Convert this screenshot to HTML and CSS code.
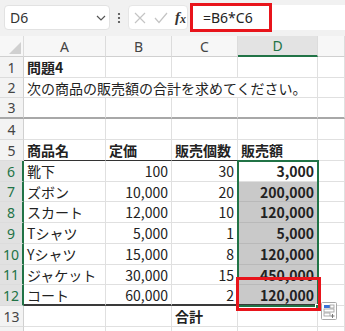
FILE: index.html
```html
<!DOCTYPE html>
<html lang="ja">
<head>
    <meta charset="UTF-8">
    <meta name="viewport" content="width=device-width, initial-scale=1.0">
    <title>問題4</title>
    <link rel="stylesheet" href="styles.css">
</head>
<body>
    <div class="formula-bar">
        <div class="name-box">
            <span>D6</span>
            <svg width="10" height="6" viewBox="0 0 10 6"><polyline points="1,1 5,5 9,1" fill="none" stroke="#555" stroke-width="1.2"/></svg>
        </div>
        <div class="kebab">
            <svg width="4" height="12" viewBox="0 0 4 12"><circle cx="2" cy="2" r="1.1" fill="#444"/><circle cx="2" cy="6" r="1.1" fill="#444"/><circle cx="2" cy="10" r="1.1" fill="#444"/></svg>
        </div>
        <div class="fx-buttons">
            <svg width="12" height="12" viewBox="0 0 12 12"><path d="M1 1 L11 11 M11 1 L1 11" stroke="#c4c4c4" stroke-width="1.2" fill="none"/></svg>
            <svg width="14" height="12" viewBox="0 0 14 12"><polyline points="1,6 5,10.5 13,1" fill="none" stroke="#c4c4c4" stroke-width="1.2"/></svg>
            <span class="fx">f<span>x</span></span>
        </div>
        <div class="formula-input">
            <span>=B6*C6</span>
            <div class="highlight"></div>
        </div>
    </div>

    <div class="sheet">
        <!-- column headers -->
        <div class="corner"><svg width="12" height="12" viewBox="0 0 12 12"><polygon points="12,0 12,12 0,12" fill="#d0d0d0"/></svg></div>
        <div class="ch">A</div>
        <div class="ch">B</div>
        <div class="ch">C</div>
        <div class="ch ch-sel">D</div>
        <div class="ch"></div>

        <!-- 1 -->
        <div class="rh">1</div>
        <div class="c b">問題4</div>
        <div class="c"></div>
        <div class="c"></div>
        <div class="c"></div>
        <div class="c"></div>

        <!-- 2 -->
        <div class="rh">2</div>
        <div class="c wide">次の商品の販売額の合計を求めてください。</div>
        <div class="c"></div>

        <!-- 3 -->
        <div class="rh fz">3</div>
        <div class="c fz"></div>
        <div class="c fz"></div>
        <div class="c fz"></div>
        <div class="c fz"></div>
        <div class="c fz"></div>

        <!-- 4 -->
        <div class="rh">4</div>
        <div class="c"></div>
        <div class="c"></div>
        <div class="c"></div>
        <div class="c"></div>
        <div class="c"></div>

        <!-- 5 -->
        <div class="rh">5</div>
        <div class="c b th">商品名</div>
        <div class="c b th">定価</div>
        <div class="c b th">販売個数</div>
        <div class="c b th">販売額</div>
        <div class="c"></div>

        <!-- 6 -->
        <div class="rh rh-sel">6</div>
        <div class="c">靴下</div>
        <div class="c num">100</div>
        <div class="c num">30</div>
        <div class="c num b">3,000</div>
        <div class="c"></div>

        <!-- 7 -->
        <div class="rh rh-sel">7</div>
        <div class="c">ズボン</div>
        <div class="c num">10,000</div>
        <div class="c num">20</div>
        <div class="c num b sel">200,000</div>
        <div class="c"></div>

        <!-- 8 -->
        <div class="rh rh-sel">8</div>
        <div class="c">スカート</div>
        <div class="c num">12,000</div>
        <div class="c num">10</div>
        <div class="c num b sel">120,000</div>
        <div class="c"></div>

        <!-- 9 -->
        <div class="rh rh-sel">9</div>
        <div class="c">Tシャツ</div>
        <div class="c num">5,000</div>
        <div class="c num">1</div>
        <div class="c num b sel">5,000</div>
        <div class="c"></div>

        <!-- 10 -->
        <div class="rh rh-sel">10</div>
        <div class="c">Yシャツ</div>
        <div class="c num">15,000</div>
        <div class="c num">8</div>
        <div class="c num b sel">120,000</div>
        <div class="c"></div>

        <!-- 11 -->
        <div class="rh rh-sel">11</div>
        <div class="c">ジャケット</div>
        <div class="c num">30,000</div>
        <div class="c num">15</div>
        <div class="c num b sel">450,000</div>
        <div class="c"></div>

        <!-- 12 -->
        <div class="rh rh-sel">12</div>
        <div class="c tb">コート</div>
        <div class="c num tb">60,000</div>
        <div class="c num tb">2</div>
        <div class="c num b sel tb">120,000</div>
        <div class="c"></div>

        <!-- 13 -->
        <div class="rh">13</div>
        <div class="c"></div>
        <div class="c"></div>
        <div class="c b">合計</div>
        <div class="c"></div>
        <div class="c"></div>

        <!-- 14 (cut off by the window) -->
        <div class="rh"></div>
        <div class="c"></div>
        <div class="c"></div>
        <div class="c"></div>
        <div class="c"></div>
        <div class="c"></div>

        <!-- overlays -->
        <div class="selection"></div>
        <div class="fill-handle"></div>
        <div class="mark"></div>
        <div class="quick-analysis">
            <svg width="16" height="18" viewBox="0 0 16 18">
                <rect x="0.5" y="0.5" width="15" height="17" rx="1" fill="#fff" stroke="#a8a8a8"/>
                <rect x="3" y="3" width="6" height="3" fill="#3a72d8"/>
                <rect x="9" y="3" width="4" height="3" fill="none" stroke="#9a9a9a" stroke-width="0.8"/>
                <rect x="3" y="7" width="10" height="3" fill="none" stroke="#9a9a9a" stroke-width="0.8"/>
                <rect x="3" y="11" width="6" height="3" fill="none" stroke="#9a9a9a" stroke-width="0.8"/>
                <path d="M11.5 12 V16 M9.5 14 H13.5" stroke="#777" stroke-width="1"/>
            </svg>
        </div>
    </div>
</body>
</html>
```

FILE: styles.css
```css
* {
    margin: 0;
    padding: 0;
    box-sizing: border-box;
}

body {
    width: 345px;
    height: 331px;
    overflow: hidden;
    background: #fff;
    font-family: "Noto Sans CJK JP", "Noto Sans", sans-serif;
    font-size: 14px;
    color: #222;
}

/* formula bar */
.formula-bar {
    height: 36px;
    background: #f1f1f1;
    display: flex;
    align-items: flex-start;
    padding-top: 5px;
}

.name-box {
    margin-left: 4px;
    width: 106px;
    height: 25px;
    background: #fff;
    border: 1px solid #e2e2e2;
    border-radius: 4px;
    display: flex;
    align-items: center;
    justify-content: space-between;
    padding: 0 3px 0 5px;
    color: #333;
    font-family: "Noto Sans", sans-serif;
}

.kebab {
    width: 18px;
    height: 25px;
    display: flex;
    align-items: center;
    justify-content: center;
}

.fx-buttons {
    width: 60px;
    height: 25px;
    background: #fff;
    border: 1px solid #e6e6e6;
    border-radius: 4px;
    display: flex;
    align-items: center;
    padding-left: 5px;
    gap: 8px;
}

.fx {
    font-family: "Liberation Serif", serif;
    font-style: italic;
    font-weight: bold;
    font-size: 15px;
    color: #333;
    margin-left: -1px;
}

.fx span {
    font-size: 12px;
    position: relative;
    top: 1px;
}

.formula-input {
    margin-left: 2px;
    flex: 1;
    height: 25px;
    background: #fff;
    border-radius: 4px 0 0 4px;
    position: relative;
    display: flex;
    align-items: center;
    padding-left: 13px;
    font-family: "Noto Sans", sans-serif;
    color: #222;
}

.formula-input .highlight {
    position: absolute;
    left: 0;
    top: -2px;
    width: 82px;
    height: 29px;
    border: 3px solid #e8141b;
}

/* sheet grid */
.sheet {
    position: relative;
    display: grid;
    grid-template-columns: 24px 82px 66px 66px 80px 1fr;
    grid-template-rows: 21px 21px 20px 21px 21px 21px 21px 20px 21px 21px 21px 20px 21px 21px 21px;
}

.corner {
    background: #f7f7f7;
    border-right: 1px solid #dcdcdc;
    border-bottom: 1px solid #d0d0d0;
    display: flex;
    align-items: flex-end;
    justify-content: flex-end;
    padding: 0 2px 2px 0;
}

.ch {
    background: #f7f7f7;
    border-right: 1px solid #dcdcdc;
    border-bottom: 1px solid #d0d0d0;
    display: flex;
    align-items: center;
    justify-content: center;
    font-family: "Noto Sans", sans-serif;
    color: #444;
}

.ch-sel {
    background: #e3e3e3;
    color: #217346;
    border-bottom: 2px solid #217346;
}

.rh {
    background: #f3f3f3;
    border-right: 1px solid #d0d0d0;
    border-bottom: 1px solid #dcdcdc;
    display: flex;
    align-items: center;
    justify-content: center;
    font-family: "Noto Sans", sans-serif;
    color: #444;
}

.rh-sel {
    background: #e1e1e1;
    color: #217346;
    border-right: 2px solid #217346;
}

.c {
    border-right: 1px solid #e0e0e0;
    border-bottom: 1px solid #e0e0e0;
    display: flex;
    align-items: center;
    padding: 0 3px;
    white-space: nowrap;
    overflow: hidden;
}

.wide {
    grid-column: span 4;
}

.num {
    justify-content: flex-end;
}

.b {
    font-weight: bold;
}

.sel {
    background: #c9c9c9;
    border-bottom-color: #b9b9b9;
}

.th {
    border-bottom: 1px solid #333;
}

.tb {
    border-bottom: 2px solid #3a3a3a;
}

.fz {
    border-bottom: 2px solid #a8a8a8;
}

/* overlays */
.selection {
    position: absolute;
    left: 237px;
    top: 124px;
    width: 82px;
    height: 147px;
    border: 2px solid #217346;
    pointer-events: none;
}

.fill-handle {
    position: absolute;
    left: 315px;
    top: 268px;
    width: 6px;
    height: 6px;
    background: #217346;
    border: 1px solid #fff;
}

.mark {
    position: absolute;
    left: 236px;
    top: 241px;
    width: 85px;
    height: 34px;
    border: 3px solid #e8141b;
}

.quick-analysis {
    position: absolute;
    left: 321px;
    top: 266px;
    width: 16px;
    height: 18px;
}
```
